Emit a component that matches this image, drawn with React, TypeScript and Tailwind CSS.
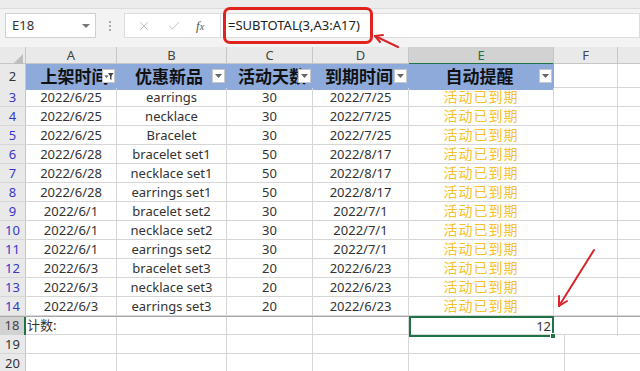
import { X, Check } from "lucide-react";

const rows = [
  ["3", "2022/6/25", "earrings", "30", "2022/7/25"],
  ["4", "2022/6/25", "necklace", "30", "2022/7/25"],
  ["5", "2022/6/25", "Bracelet", "30", "2022/7/25"],
  ["6", "2022/6/28", "bracelet set1", "50", "2022/8/17"],
  ["7", "2022/6/28", "necklace set1", "50", "2022/8/17"],
  ["8", "2022/6/28", "earrings set1", "50", "2022/8/17"],
  ["9", "2022/6/1", "bracelet set2", "30", "2022/7/1"],
  ["10", "2022/6/1", "necklace set2", "30", "2022/7/1"],
  ["11", "2022/6/1", "earrings set2", "30", "2022/7/1"],
  ["12", "2022/6/3", "bracelet set3", "20", "2022/6/23"],
  ["13", "2022/6/3", "necklace set3", "20", "2022/6/23"],
  ["14", "2022/6/3", "earrings set3", "20", "2022/6/23"],
];

const cols = "grid grid-cols-[26px_91px_110px_86px_96px_145px_64px_1fr]";
const font = { fontFamily: '"Noto Sans", "Noto Sans CJK SC", sans-serif' };

function FilterBtn({ active }: { active?: boolean }) {
  return (
    <div className="absolute right-[2px] top-[5px] flex h-[14px] w-[13px] items-center justify-center border border-[#c8c8c8] bg-white">
      {active ? (
        <svg width="10" height="9" viewBox="0 0 10 9">
          <path d="M0.5 3.5 L2.5 6 L4.5 3.5 Z" fill="#555" />
          <path d="M4 1 H9.5 L7.5 4 V8 L6 7 V4 Z" fill="#444" />
        </svg>
      ) : (
        <svg width="7" height="4" viewBox="0 0 7 4">
          <path d="M0 0 H7 L3.5 4 Z" fill="#666" />
        </svg>
      )}
    </div>
  );
}

function HeadCell({ text, active, shift = 0 }: { text: string; active?: boolean; shift?: number }) {
  return (
    <div className="relative flex h-full items-center justify-center overflow-hidden text-[17px] font-bold text-[#111]">
      <span className="whitespace-nowrap" style={{ marginLeft: shift }}>
        {text}
      </span>
      <FilterBtn active={active} />
    </div>
  );
}

export default function App() {
  return (
    <div className="relative h-[371px] w-[640px] overflow-hidden bg-white" style={font}>
      {/* formula bar */}
      <div className="h-[9px] border-b border-[#dcdcdc] bg-[#ececec]" />
      <div className="flex h-[38px] items-start bg-[#f3f3f3] pt-[4px]">
        <div className="ml-[5px] flex h-[25px] w-[91px] items-center justify-between border border-[#d0d0d0] bg-white pl-[6px] pr-[5px] text-[13px] text-[#333]">
          <span>E18</span>
          <svg width="8" height="4" viewBox="0 0 8 4">
            <path d="M0 0 H8 L4 4 Z" fill="#777" />
          </svg>
        </div>
        <div className="flex h-[25px] w-[28px] flex-col items-center justify-center gap-[2px]">
          <span className="h-[2px] w-[2px] bg-[#aaa]" />
          <span className="h-[2px] w-[2px] bg-[#aaa]" />
          <span className="h-[2px] w-[2px] bg-[#aaa]" />
        </div>
        <div className="flex h-[25px] w-[97px] items-center border border-[#dcdcdc] bg-white">
          <X className="ml-[12px] h-[14px] w-[14px] text-[#b8b8b8]" strokeWidth={1.5} />
          <Check className="ml-[16px] h-[14px] w-[14px] text-[#b8b8b8]" strokeWidth={1.5} />
          <span className="ml-[15px] font-['Liberation_Serif'] text-[13px] italic text-[#555]">
            f<span className="text-[10px]">x</span>
          </span>
        </div>
        <div className="flex h-[25px] flex-1 items-center border border-l-0 border-[#dcdcdc] bg-white pl-[7px] text-[13px] text-[#222]">
          =SUBTOTAL(3,A3:A17)
        </div>
      </div>

      {/* column headers */}
      <div className={`${cols} h-[17px] border-b border-[#c6c6c6] bg-[#e9e9e9] text-[13px] leading-[16px] text-[#444]`}>
        <div className="relative border-r border-[#c6c6c6]">
          <svg className="absolute bottom-[1px] right-[2px]" width="10" height="10" viewBox="0 0 10 10">
            <path d="M10 0 V10 H0 Z" fill="#bdbdbd" />
          </svg>
        </div>
        {["A", "B", "C", "D"].map((c) => (
          <div key={c} className="border-r border-[#c6c6c6] text-center">
            {c}
          </div>
        ))}
        <div className="border-b-2 border-r border-b-[#217346] border-r-[#c6c6c6] bg-[#d2d2d2] text-center text-[#217346]">
          E
        </div>
        <div className="border-r border-[#c6c6c6] text-center">F</div>
        <div />
      </div>

      {/* row 2 table header */}
      <div className={`${cols} h-[24px] border-b border-[#d6d6d6]`}>
        <div className="flex items-center justify-center border-r border-[#c6c6c6] bg-[#e9e9e9] text-[13px] text-[#333]">
          2
        </div>
        <div className="col-span-5 grid grid-cols-[91px_110px_86px_96px_145px] bg-[#8eaadb]">
          <HeadCell text="上架时间" active shift={6} />
          <HeadCell text="优惠新品" shift={-6} />
          <HeadCell text="活动天数" shift={4} />
          <HeadCell text="到期时间" shift={-4} />
          <HeadCell text="自动提醒" shift={-4} />
        </div>
        <div className="border-r border-[#d6d6d6]" />
        <div />
      </div>

      {/* data rows */}
      {rows.map((r) => (
        <div key={r[0]} className={`${cols} h-[19px] border-b border-[#d6d6d6] text-[13px] leading-[18px] text-[#333]`}>
          <div className="border-r border-[#c6c6c6] bg-[#e9e9e9] text-center text-[#3636c8]">{r[0]}</div>
          <div className="border-r border-[#d6d6d6] text-center">{r[1]}</div>
          <div className="border-r border-[#d6d6d6] text-center">{r[2]}</div>
          <div className="border-r border-[#d6d6d6] text-center">{r[3]}</div>
          <div className="border-r border-[#d6d6d6] text-center">{r[4]}</div>
          <div className="border-r border-[#d6d6d6] text-center text-[14px] tracking-[1px] text-[#f5c12e]">活动已到期</div>
          <div className="border-r border-[#d6d6d6]" />
          <div />
        </div>
      ))}

      {/* row 18 */}
      <div className={`${cols} h-[19px] border-b border-[#d6d6d6] border-t border-t-[#a8a8a8] text-[13px] leading-[17px] text-[#333]`}>
        <div className="border-r-2 border-[#217346] bg-[#d2d2d2] text-center text-[#444]">18</div>
        <div className="border-r border-[#d6d6d6] pl-[1px]">计数:</div>
        <div className="border-r border-[#d6d6d6]" />
        <div className="border-r border-[#d6d6d6]" />
        <div className="border-r border-[#d6d6d6]" />
        <div className="relative -my-[1px] border-2 border-[#217346] pr-[1px] text-right">
          12
          <span className="absolute -bottom-[4px] -right-[4px] h-[6px] w-[6px] border border-white bg-[#217346]" />
        </div>
        <div className="border-r border-[#d6d6d6]" />
        <div />
      </div>

      {/* rows 19-20 */}
      {["19", "20"].map((n) => (
        <div key={n} className="grid h-[19px] grid-cols-[26px_91px_110px_86px_96px_156px_1fr] border-b border-[#d6d6d6] text-[13px] leading-[18px] text-[#333]">
          <div className="border-r border-[#c6c6c6] bg-[#e9e9e9] text-center">{n}</div>
          <div className="border-r border-[#d6d6d6]" />
          <div className="border-r border-[#d6d6d6]" />
          <div className="border-r border-[#d6d6d6]" />
          <div className="border-r border-[#d6d6d6]" />
          <div className="border-r border-[#d6d6d6]" />
          <div />
        </div>
      ))}

      {/* annotations */}
      <div className="pointer-events-none absolute left-[223px] top-[7px] h-[37px] w-[150px] rounded-[7px] border-[3px] border-[#e0231f]" />
      <svg className="pointer-events-none absolute left-0 top-0" width="640" height="371" viewBox="0 0 640 371">
        <g stroke="#d8262a" strokeWidth="2" fill="none" strokeLinecap="round">
          <path d="M398 47 L375 36" />
          <path d="M375 36 L383 35" />
          <path d="M375 36 L380 42" />
          <path d="M594 250 L559 306" />
          <path d="M559 306 L559 296" />
          <path d="M559 306 L567 301" />
        </g>
      </svg>
    </div>
  );
}
